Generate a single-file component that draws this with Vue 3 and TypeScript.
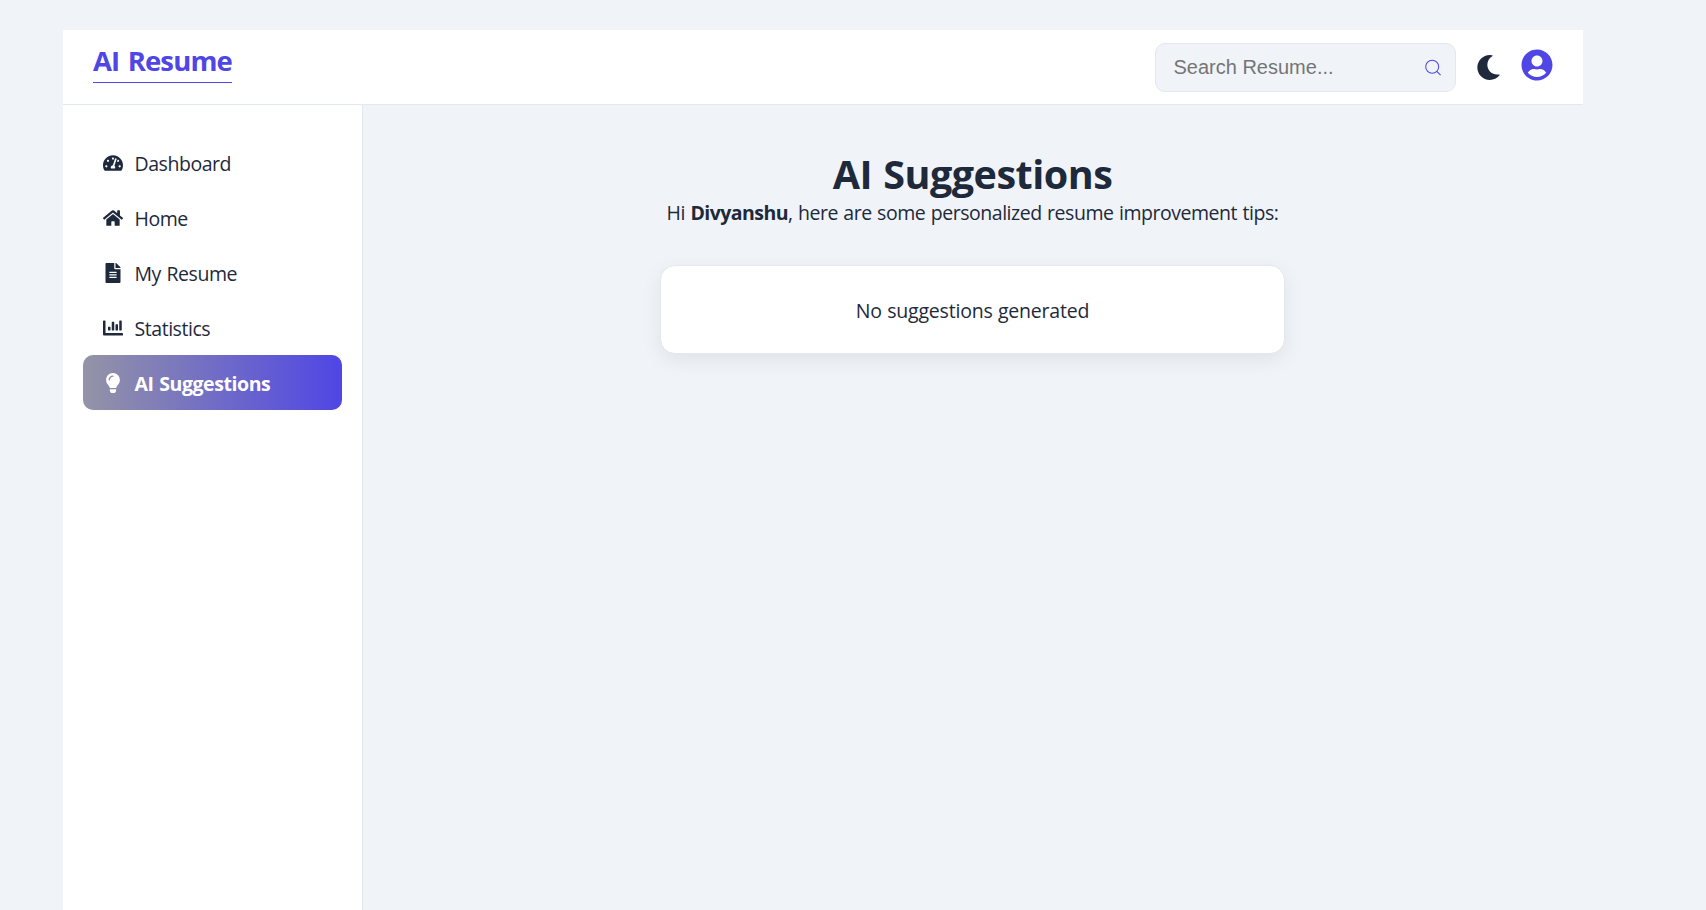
<script setup lang="ts">
import { ref } from 'vue'

interface NavItem {
  key: string
  label: string
  viewBox: string
  path: string
}

const items: NavItem[] = [
  {
    key: 'dashboard',
    label: 'Dashboard',
    viewBox: '0 0 576 512',
    path: 'M288 32C128.94 32 0 160.94 0 320c0 52.8 14.25 102.26 39.06 144.8 5.61 9.62 16.3 15.2 27.44 15.2h443c11.14 0 21.83-5.58 27.44-15.2C561.75 422.26 576 372.8 576 320c0-159.06-128.94-288-288-288zm0 64c14.71 0 26.58 10.13 30.32 23.65-1.11 2.26-2.64 4.23-3.45 6.67l-9.22 27.67c-5.13 3.49-10.97 6.01-17.64 6.01-17.67 0-32-14.33-32-32S270.33 96 288 96zM96 384c-17.67 0-32-14.33-32-32s14.33-32 32-32 32 14.33 32 32-14.33 32-32 32zm48-160c-17.67 0-32-14.33-32-32s14.33-32 32-32 32 14.33 32 32-14.33 32-32 32zm246.77-72.41l-61.33 184C343.13 347.33 352 364.54 352 384c0 11.72-3.38 22.55-8.88 32H232.88c-5.5-9.45-8.88-20.28-8.88-32 0-33.94 26.5-61.43 59.9-63.59l61.34-184.01c4.17-12.56 17.73-19.45 30.36-15.17 12.57 4.19 19.35 17.79 15.17 30.36zm14.66 57.2l15.52-46.55c3.47-1.29 7.13-2.23 11.05-2.23 17.67 0 32 14.33 32 32s-14.33 32-32 32c-11.38-.01-20.89-6.28-26.57-15.22zM480 384c-17.67 0-32-14.33-32-32s14.33-32 32-32 32 14.33 32 32-14.33 32-32 32z',
  },
  {
    key: 'home',
    label: 'Home',
    viewBox: '0 0 576 512',
    path: 'M280.37 148.26L96 300.11V464a16 16 0 0 0 16 16l112.06-.29a16 16 0 0 0 15.92-16V368a16 16 0 0 1 16-16h64a16 16 0 0 1 16 16v95.64a16 16 0 0 0 16 16.05L464 480a16 16 0 0 0 16-16V300L295.67 148.26a12.19 12.19 0 0 0-15.3 0zM571.6 251.47L488 182.56V44.05a12 12 0 0 0-12-12h-56a12 12 0 0 0-12 12v72.61L318.47 43a48 48 0 0 0-61 0L4.34 251.47a12 12 0 0 0-1.6 16.9l25.5 31A12 12 0 0 0 45.15 301l235.22-193.74a12.19 12.19 0 0 1 15.3 0L530.9 301a12 12 0 0 0 16.9-1.6l25.5-31a12 12 0 0 0-1.7-16.93z',
  },
  {
    key: 'resume',
    label: 'My Resume',
    viewBox: '0 0 384 512',
    path: 'M224 136V0H24C10.7 0 0 10.7 0 24v464c0 13.3 10.7 24 24 24h336c13.3 0 24-10.7 24-24V160H248c-13.2 0-24-10.8-24-24zm64 236c0 6.6-5.4 12-12 12H108c-6.6 0-12-5.4-12-12v-8c0-6.6 5.4-12 12-12h168c6.6 0 12 5.4 12 12v8zm0-64c0 6.6-5.4 12-12 12H108c-6.6 0-12-5.4-12-12v-8c0-6.6 5.4-12 12-12h168c6.6 0 12 5.4 12 12v8zm0-72v8c0 6.6-5.4 12-12 12H108c-6.6 0-12-5.4-12-12v-8c0-6.6 5.4-12 12-12h168c6.6 0 12 5.4 12 12zm96-114.1v6.1H256V0h6.1c6.4 0 12.5 2.5 17 7l97.9 98c4.5 4.5 7 10.6 7 16.9z',
  },
  {
    key: 'stats',
    label: 'Statistics',
    viewBox: '0 0 512 512',
    path: 'M332.8 320h38.4c6.4 0 12.8-6.4 12.8-12.8V172.8c0-6.4-6.4-12.8-12.8-12.8h-38.4c-6.4 0-12.8 6.4-12.8 12.8v134.4c0 6.4 6.4 12.8 12.8 12.8zm96 0h38.4c6.4 0 12.8-6.4 12.8-12.8V76.8c0-6.4-6.4-12.8-12.8-12.8h-38.4c-6.4 0-12.8 6.4-12.8 12.8v230.4c0 6.4 6.4 12.8 12.8 12.8zm-288 0h38.4c6.4 0 12.8-6.4 12.8-12.8v-70.4c0-6.4-6.4-12.8-12.8-12.8h-38.4c-6.4 0-12.8 6.4-12.8 12.8v70.4c0 6.4 6.4 12.8 12.8 12.8zm96 0h38.4c6.4 0 12.8-6.4 12.8-12.8V108.8c0-6.4-6.4-12.8-12.8-12.8h-38.4c-6.4 0-12.8 6.4-12.8 12.8v198.4c0 6.4 6.4 12.8 12.8 12.8zM496 384H64V80c0-8.84-7.16-16-16-16H16C7.16 64 0 71.16 0 80v336c0 17.67 14.33 32 32 32h464c8.84 0 16-7.16 16-16v-32c0-8.84-7.16-16-16-16z',
  },
  {
    key: 'ai',
    label: 'AI Suggestions',
    viewBox: '0 0 352 512',
    path: 'M96.06 454.35c.01 6.29 1.87 12.45 5.36 17.69l17.09 25.69a31.99 31.99 0 0 0 26.64 14.28h61.71a31.99 31.99 0 0 0 26.64-14.28l17.09-25.69a31.989 31.989 0 0 0 5.36-17.69l.04-38.35H96.01l.05 38.35zM0 176c0 44.37 16.45 84.85 43.56 115.78 16.52 18.85 42.36 58.23 52.21 91.45.04.26.07.52.11.78h160.24c.04-.26.07-.51.11-.78 9.85-33.22 35.69-72.6 52.21-91.45C335.55 260.85 352 220.37 352 176 352 78.61 272.91-.3 175.45 0 73.44.31 0 82.97 0 176zm176-80c-44.11 0-80 35.89-80 80 0 8.84-7.16 16-16 16s-16-7.16-16-16c0-61.76 50.24-112 112-112 8.84 0 16 7.16 16 16s-7.16 16-16 16z',
  },
]

const active = ref('ai')
const query = ref('')
const userName = 'Divyanshu'
</script>

<template>
  <div class="shell">
    <header class="topbar">
      <a class="logo">AI Resume</a>
      <div class="tools">
        <label class="search">
          <input v-model="query" type="text" placeholder="Search Resume..." />
          <svg class="search-icon" viewBox="0 0 20 20">
            <circle cx="9.2" cy="8.7" r="6.5" />
            <path d="M13.8 13.3L17.6 17.1" />
          </svg>
        </label>
        <svg class="moon" viewBox="0 0 512 512">
          <path d="M283.211 512c78.962 0 151.079-35.925 198.857-94.792 7.068-8.708-.639-21.43-11.562-19.35-124.203 23.654-238.262-71.576-238.262-196.954 0-72.222 38.662-138.635 101.498-174.394 9.686-5.512 7.25-20.197-3.756-22.23A258.156 258.156 0 0 0 283.211 0c-141.309 0-256 114.511-256 256 0 141.309 114.511 256 256 256z" />
        </svg>
        <svg class="user" viewBox="0 0 496 512">
          <path d="M248 8C111 8 0 119 0 256s111 248 248 248 248-111 248-248S385 8 248 8zm0 96c48.6 0 88 39.4 88 88s-39.4 88-88 88-88-39.4-88-88 39.4-88 88-88zm0 344c-58.7 0-111.3-26.6-146.5-68.2 18.8-35.4 55.6-59.8 98.5-59.8 2.4 0 4.8.4 7.1 1.1 13 4.2 26.6 6.9 40.9 6.9 14.3 0 28-2.7 40.9-6.9 2.3-.7 4.7-1.1 7.1-1.1 42.9 0 79.7 24.4 98.5 59.8C359.3 421.4 306.7 448 248 448z" />
        </svg>
      </div>
    </header>

    <div class="body">
      <nav class="sidebar">
        <a
          v-for="item in items"
          :key="item.key"
          class="nav-item"
          :class="{ active: item.key === active }"
          @click="active = item.key"
        >
          <svg class="nav-icon" :viewBox="item.viewBox"><path :d="item.path" /></svg>
          <span class="nav-label">{{ item.label }}</span>
        </a>
      </nav>

      <main class="content">
        <h1 class="title">AI Suggestions</h1>
        <p class="subtitle">Hi <strong>{{ userName }}</strong>, here are some personalized resume improvement tips:</p>
        <section class="card">
          <p class="empty">No suggestions generated</p>
        </section>
      </main>
    </div>
  </div>
</template>

<style>
body {
  background: #f0f4f8;
  overflow: hidden;
}
</style>

<style scoped>
.shell {
  box-sizing: border-box;
  width: 1520px;
  height: 880px;
  margin: 30px 0 0 63px;
  display: flex;
  flex-direction: column;
  font-family: 'Segoe UI', 'Open Sans', 'Noto Sans', sans-serif;
  font-size: 19.5px;
  color: #1e293b;
}

.topbar {
  box-sizing: border-box;
  height: 75px;
  flex: none;
  display: flex;
  justify-content: space-between;
  align-items: flex-start;
  padding: 0 30px;
  background: #fff;
  border-bottom: 1px solid #e2e8f0;
}

.logo {
  box-sizing: border-box;
  width: 139px;
  margin-top: 12px;
  padding-bottom: 2px;
  border-bottom: 1px solid #4f46e5;
  font-size: 27.5px;
  line-height: 38px;
  font-weight: 700;
  letter-spacing: -0.85px;
  word-spacing: 2px;
  white-space: nowrap;
  color: #4f46e5;
}

.tools {
  display: flex;
  align-items: flex-start;
}

.search {
  box-sizing: border-box;
  width: 301px;
  height: 49px;
  margin-top: 13px;
  padding: 0 12px 0 17.5px;
  display: flex;
  align-items: center;
  background: #f0f4f8;
  border: 1px solid #e2e8f0;
  border-radius: 10px;
}

.search input {
  flex: 1;
  min-width: 0;
  padding: 0;
  border: 0;
  outline: 0;
  background: transparent;
  font-family: 'Liberation Sans', Arial, sans-serif;
  font-size: 20px;
  color: #1e293b;
}

.search input::placeholder {
  color: #757575;
}

.search-icon {
  width: 20px;
  height: 20px;
  fill: none;
  stroke: #4f46e5;
  stroke-width: 1.05;
}

.moon {
  width: 25px;
  height: 25px;
  margin: 25px 0 0 20px;
  fill: #1e293b;
}

.user {
  width: 32px;
  height: 32px;
  margin: 19px 0 0 20px;
  fill: #4f46e5;
}

.body {
  flex: 1;
  display: flex;
}

.sidebar {
  box-sizing: border-box;
  width: 300px;
  padding: 30px 20px;
  background: #fff;
  border-right: 1px solid #e2e8f0;
}

.nav-item {
  height: 55px;
  padding: 0 20px;
  display: flex;
  align-items: center;
  gap: 11.5px;
  border-radius: 10px;
  cursor: pointer;
}

.nav-icon {
  width: 20px;
  height: 20px;
  fill: currentColor;
}

.nav-label {
  padding-top: 2px;
  line-height: 27px;
  letter-spacing: -0.45px;
  word-spacing: 1px;
}

.nav-item.active {
  background: linear-gradient(90deg, #9494a6, #4f46e5);
  color: #fff;
  font-weight: 700;
}

.active .nav-label {
  letter-spacing: -0.42px;
}

.content {
  flex: 1;
  padding: 49px 1px 0 0;
  display: flex;
  flex-direction: column;
  align-items: center;
}

.title {
  margin: 0;
  font-size: 39.5px;
  line-height: 40px;
  font-weight: 700;
  letter-spacing: -0.5px;
  word-spacing: 1.5px;
}

.subtitle {
  margin: 4px 0 0;
  line-height: 29px;
  letter-spacing: -0.46px;
  word-spacing: 0.8px;
}

.subtitle strong {
  font-weight: 700;
  letter-spacing: -0.55px;
}

.card {
  box-sizing: border-box;
  width: 625px;
  height: 89px;
  margin-top: 38px;
  padding-top: 30px;
  background: #fff;
  border: 1px solid #e2e8f0;
  border-radius: 15px;
  box-shadow: 0 6px 20px rgba(0, 0, 0, 0.07);
  text-align: center;
}

.empty {
  margin: 0;
  line-height: 29px;
  letter-spacing: -0.2px;
  word-spacing: 0.5px;
}
</style>
